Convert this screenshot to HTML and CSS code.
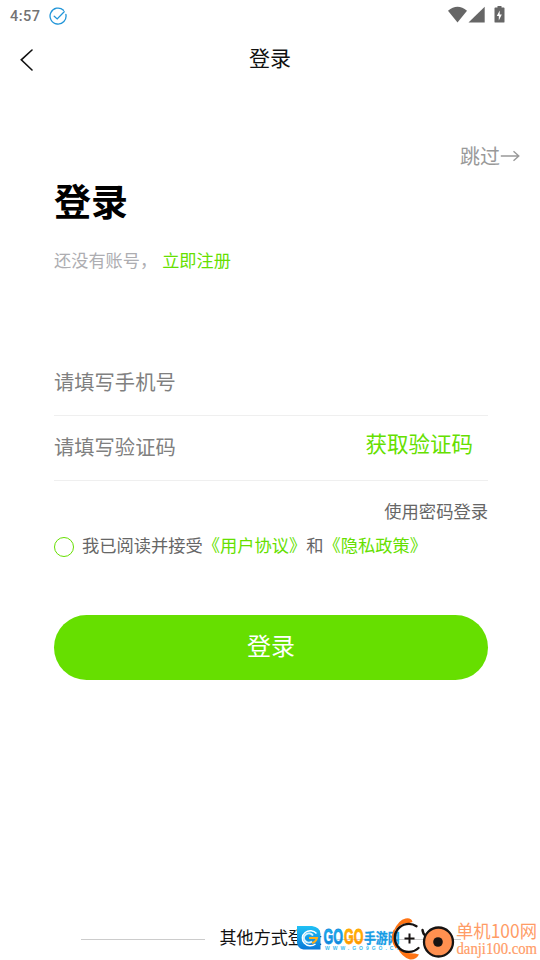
FILE: index.html
```html
<!DOCTYPE html>
<html lang="zh-CN">
<head>
<meta charset="utf-8">
<title>登录</title>
<link rel="stylesheet" href="styles.css">
</head>
<body>
<div class="screen">
  <div class="status">
    <span class="clock">4:57</span>
    <svg class="check" width="18" height="18" viewBox="0 0 18 18" fill="none" stroke="#2195d8" stroke-width="1.3" stroke-linecap="round"><path d="M14.500 3.200A8 8 0 1 0 16.900 7.500"/><path d="M5.200 9.200l3 2.700 7-7.200" /></svg>
    <svg class="signals" width="58" height="18" viewBox="0 0 58 18" fill="#666"><path d="M0 4.700Q9.500-3 19 4.700L9.500 16.500z"/><path d="M36.700.7v15.800H20.500z"/><path d="M49.500 0h4v1.500h2.200q.8 0 .8.8v13.400q0 .9-.8.9h-8.400q-.8 0-.8-.9V2.300q0-.8.8-.8h2.200z"/><path fill="#fff" d="M51.700 4.500v4h2.100l-3 6v-4.500h-2z"/></svg>
  </div>
  <header class="nav">
    <svg class="back" width="14" height="22" viewBox="0 0 14 22" fill="none" stroke="#111" stroke-width="1.6" stroke-linecap="round"><path d="M12 1L1.300 10.800L12 21"/></svg>
    <span class="nav-title">登录</span>
  </header>
  <div class="skip"><span>跳过</span><svg width="20" height="12" viewBox="0 0 20 12" fill="none" stroke="#999" stroke-width="1.400"><path d="M.8 6h18M13.500 1.200l5.300 4.800-5.300 4.800"/></svg></div>
  <main class="content">
    <h1>登录</h1>
    <p class="register">还没有账号，<a>立即注册</a></p>
    <div class="field phone">请填写手机号</div>
    <div class="field code"><span>请填写验证码</span><span class="get-code">获取验证码</span></div>
    <div class="password">使用密码登录</div>
    <div class="agree"><i class="radio"></i><span>我已阅读并接受<a>《用户协议》</a>和<a>《隐私政策》</a></span></div>
    <div class="submit">登录</div>
  </main>
  <footer class="other">
    <i class="rule"></i><span>其他方式登录</span><i class="rule"></i>
    <svg class="marks" width="244" height="48" viewBox="296 912 244 48">
      <defs>
        <linearGradient id="blue" x1="0" y1="0" x2="0" y2="1"><stop offset="0" stop-color="#20c1f5"/><stop offset="1" stop-color="#0878d8"/></linearGradient>
        <linearGradient id="gold" x1="0" y1="0" x2="0" y2="1"><stop offset="0" stop-color="#ffc400"/><stop offset="1" stop-color="#ff8500"/></linearGradient>
      </defs>
      <path fill="url(#blue)" d="M297 926h15q8 1 8.500 8v15.500h-17q-6-1-6.500-7z"/>
      <path d="M316.500 933.500a8 7.500 0 1 0-1 10.500" fill="none" stroke="#fff" stroke-width="1.500"/>
      <path d="M313 935.500a5 4.500 0 1 0-1 6" fill="none" stroke="#d5f2ff" stroke-width="2"/>
      <path d="M309 938h8q-1 4-5 5" fill="none" stroke="#ffae19" stroke-width="2"/>
      <g class="gogo"><text x="323.500" y="944" textLength="19.500" lengthAdjust="spacingAndGlyphs" fill="url(#blue)" stroke="#108ee0">GO</text><text x="344" y="944" textLength="19.500" lengthAdjust="spacingAndGlyphs" fill="url(#gold)" stroke="#ffa400">GO</text></g>
      <text class="game" x="364" y="942.500" textLength="35.500" lengthAdjust="spacingAndGlyphs">手游网</text>
      <text class="site" x="325" y="949.500" textLength="75">WWW.GO9GO.CC</text>
      <path fill="#ff7414" d="M393.500 931q5-11 12-12.500q6-1 7 3.500l-3 1q-8-1-14 7zM397 947q6 7 18 6.500l4 1q-3 5.500-9 5q-8-2-13-12.500z"/>
      <path d="M394.500 930q-4 10 2 18" fill="none" stroke="#ff7414" stroke-width="2"/>
      <path d="M416.500 926.200a14 14 0 1 0 2 21.800M422.500 930q.5 4 3 5.500M431 930.500q-5 3-6 9" fill="none" stroke="#171312" stroke-width="2.400" stroke-linecap="round"/>
      <path d="M409.500 933.500v10M404.500 938.500h10" stroke="#171312" stroke-width="2"/>
      <circle cx="438.500" cy="942" r="14.500" fill="#ff9050" stroke="#171312" stroke-width="2.300"/>
      <circle cx="438" cy="942" r="4.800" fill="#171312"/>
      <text class="danji" x="456" y="937.500" textLength="81" lengthAdjust="spacingAndGlyphs">单机100网</text>
      <text class="domain" x="456.500" y="954" textLength="80.500" lengthAdjust="spacingAndGlyphs">danji100.com</text>
    </svg>
  </footer>
</div>
</body>
</html>
```
FILE: styles.css
```css
* { box-sizing: border-box; }
body { margin: 0; background: #fff; font-family: "Noto Sans CJK SC", sans-serif; color: #111; }
.screen { width: 540px; height: 960px; overflow: hidden; display: flex; flex-direction: column; }
svg { display: block; flex: none; }
a { color: #66df00; }
.status { height: 32px; padding: 0 34px 0 10px; display: flex; align-items: center; }
.clock { font: 500 14.5px/32px Roboto, sans-serif; letter-spacing: .5px; width: 39px; color: #737373; padding-top: 1px; }
.signals { margin-left: auto; margin-top: -2px; }
.nav { height: 54px; display: grid; grid-template-columns: 100px 1fr 100px; align-items: center; padding: 0; }
.back { margin-left: 20px; margin-top: 1px; }
.nav-title { text-align: center; font-size: 21px; line-height: 30px; margin-top: -4px; }
.skip { display: flex; justify-content: flex-end; align-items: center; height: 30px; margin-top: 55px; padding-right: 20px; font-size: 20px; line-height: 30px; color: #999; }
.content { padding: 0 52px 0 54px; }
h1 { margin: 4px 0 0; font-size: 37px; line-height: 50px; font-weight: 700; color: #000; }
.register { margin: 22px 0 0; font-size: 17.2px; line-height: 26px; color: #adadb1; display: flex; }
.register a { margin-left: 5px; }
.field { height: 65px; border-bottom: 1px solid #efefef; font-size: 20.3px; line-height: 61px; color: #808080; display: flex; justify-content: space-between; }
.phone { margin-top: 78px; }
.get-code { color: #66df00; font-size: 21.5px; line-height: 54px; margin-right: 15px; }
.password { text-align: right; margin-top: 17px; font-size: 17.3px; line-height: 26px; color: #666; }
.agree { display: flex; align-items: center; height: 26px; margin-top: 9px; font-size: 17.25px; line-height: 26px; color: #666; white-space: nowrap; }
.agree span { margin-top: -2px; }
.radio { width: 20px; height: 20px; border: 1px solid #66df00; border-radius: 50%; margin: 2px 8px 0 0; }
.submit { height: 65px; border-radius: 33px; background: #66df00; color: #fff; text-align: center; font-size: 24px; line-height: 60px; margin-top: 56px; }
.other { position: relative; margin-top: auto; height: 48px; display: flex; align-items: center; padding: 2px 0 0 81px; font-size: 17.1px; line-height: 26px; }
.other > span { margin: 0 15px 0 14.5px; white-space: nowrap; }
.rule { width: 124px; height: 1px; background: #ccc; margin-top: 5px; }
.marks { position: absolute; right: 0; bottom: 0; overflow: visible; }
.gogo { font: 700 22px "Liberation Sans", sans-serif; stroke-width: .8px; }
.game { font-size: 14px; font-weight: 700; fill: #159be5; stroke: #159be5; stroke-width: .3px; }
.site { font: 700 5px "Liberation Sans", sans-serif; fill: #39bcef; }
.danji { font-size: 18.5px; fill: #ff9c66; }
.domain { font: 16px "Liberation Serif", serif; fill: #ff9c66; stroke: #ff9c66; stroke-width: .2px; }
```
